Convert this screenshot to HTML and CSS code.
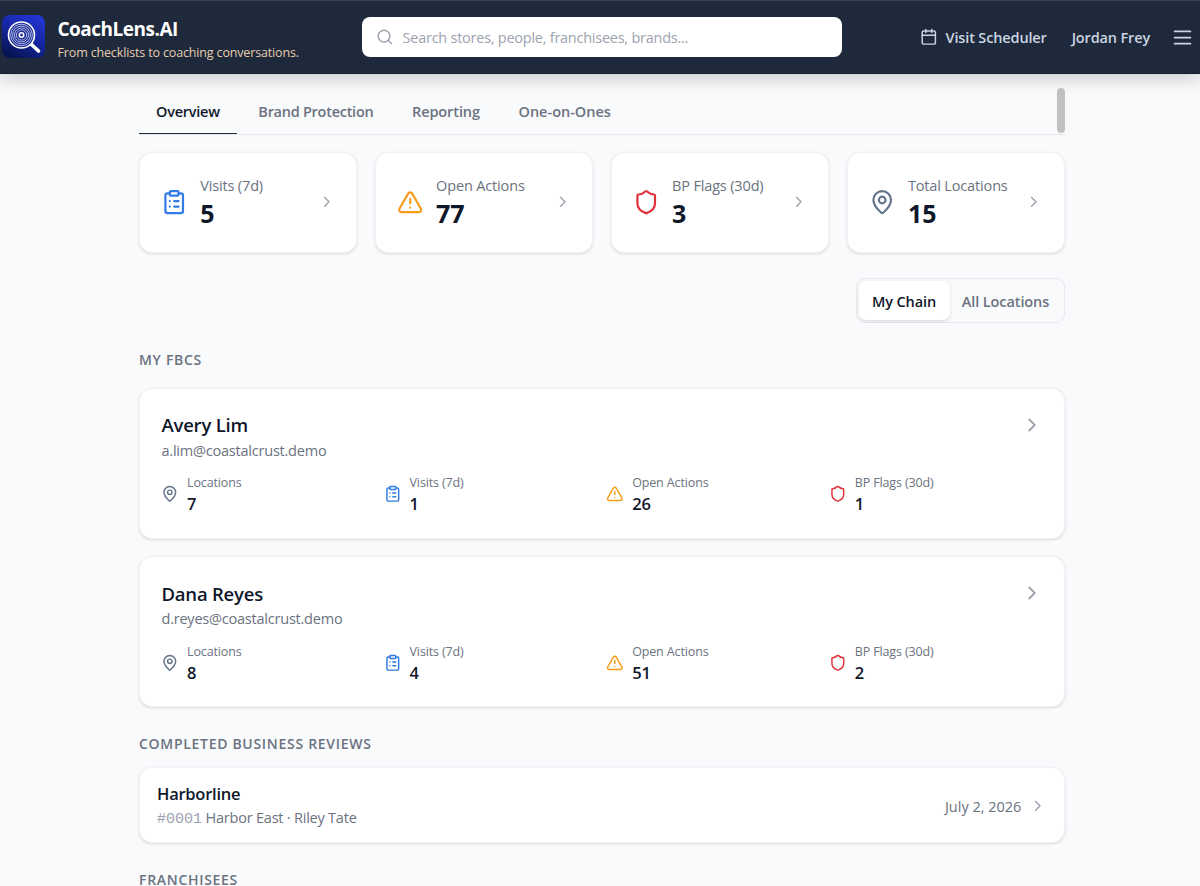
FILE: index.html
```html
<!DOCTYPE html>
<html lang="en">
<head>
    <meta charset="UTF-8">
    <meta name="viewport" content="width=device-width, initial-scale=1.0">
    <title>CoachLens.AI</title>
    <link rel="stylesheet" href="styles.css">
</head>
<body>
    <svg class="sprite">
        <symbol id="clipboard" viewBox="0 0 24 24">
            <rect x="8" y="2" width="8" height="4" rx="1"/>
            <path d="M16 4h2a2 2 0 0 1 2 2v14a2 2 0 0 1-2 2H6a2 2 0 0 1-2-2V6a2 2 0 0 1 2-2h2M12 11h4M12 16h4M8 11h.01M8 16h.01"/>
        </symbol>
        <symbol id="warning" viewBox="0 0 24 24">
            <path d="m21.73 18-8-14a2 2 0 0 0-3.48 0l-8 14A2 2 0 0 0 4 21h16a2 2 0 0 0 1.73-3ZM12 9v4M12 17h.01"/>
        </symbol>
        <symbol id="shield" viewBox="0 0 24 24">
            <path d="M20 13c0 5-3.5 7.5-7.66 8.95a1 1 0 0 1-.67-.01C7.5 20.5 4 18 4 13V6a1 1 0 0 1 1-1c2 0 4.5-1.2 6.24-2.72a1.17 1.17 0 0 1 1.52 0C14.51 3.81 17 5 19 5a1 1 0 0 1 1 1z"/>
        </symbol>
        <symbol id="pin" viewBox="0 0 24 24">
            <path d="M20 10c0 5-5.54 10.19-7.4 11.8a1 1 0 0 1-1.2 0C9.54 20.19 4 15 4 10a8 8 0 0 1 16 0"/>
            <circle cx="12" cy="10" r="3"/>
        </symbol>
        <symbol id="chevron" viewBox="0 0 24 24"><path d="m9 18 6-6-6-6"/></symbol>
    </svg>

    <header class="header">
        <div class="brand">
            <svg class="logo" viewBox="0 0 43 43">
                <defs>
                    <linearGradient id="logo-bg" x1="0.8" y1="0" x2="0.3" y2="1">
                        <stop offset="0" stop-color="#2436d4"/>
                        <stop offset="0.5" stop-color="#1526a0"/>
                        <stop offset="1" stop-color="#071353"/>
                    </linearGradient>
                </defs>
                <rect width="43" height="43" rx="8" fill="url(#logo-bg)"/>
                <path d="M29 29l7.5 7" stroke="#fff" stroke-width="3.6" stroke-linecap="round"/>
                <circle cx="19.5" cy="20" r="13" fill="#1b2b93" stroke="#fff" stroke-width="1.6"/>
                <g fill="none" stroke="#d5dafa" stroke-width="0.8">
                    <circle cx="19.5" cy="20" r="10.8"/>
                    <circle cx="19.5" cy="20" r="8.9"/>
                    <circle cx="19.5" cy="20" r="7"/>
                    <circle cx="19.5" cy="20" r="5.1"/>
                </g>
                <circle cx="19.5" cy="20" r="2.2" fill="#1b2b93" stroke="#fff" stroke-width="1.6"/>
            </svg>
            <div class="brand-text">
                <div class="brand-name">CoachLens.AI</div>
                <div class="brand-tag">From checklists to coaching conversations.</div>
            </div>
        </div>
        <div class="search">
            <svg class="icon search-icon" viewBox="0 0 24 24"><circle cx="11" cy="11" r="8"/><path d="m21 21-4.3-4.3"/></svg>
            <span>Search stores, people, franchisees, brands...</span>
        </div>
        <nav class="nav">
            <a class="nav-link scheduler">
                <svg class="icon calendar" viewBox="0 0 24 24"><rect x="3" y="4" width="18" height="18" rx="2"/><path d="M8 2v4M16 2v4M3 10h18"/></svg>
                <span>Visit Scheduler</span>
            </a>
            <a class="nav-link user">Jordan Frey</a>
            <svg class="icon menu" viewBox="0 0 24 24"><path d="M3 5h18M3 12h18M3 19h18"/></svg>
        </nav>
    </header>

    <main class="container">
        <div class="tabs">
            <a class="tab active">Overview</a>
            <a class="tab tab-brand">Brand Protection</a>
            <a class="tab tab-report">Reporting</a>
            <a class="tab tab-ones">One-on-Ones</a>
            <span class="scroll-thumb"></span>
        </div>

        <div class="stats">
            <div class="card stat">
                <svg class="icon stat-icon blue"><use href="#clipboard"/></svg>
                <div>
                    <div class="stat-label">Visits (7d)</div>
                    <div class="stat-value">5</div>
                </div>
                <svg class="icon chevron"><use href="#chevron"/></svg>
            </div>
            <div class="card stat">
                <svg class="icon stat-icon amber"><use href="#warning"/></svg>
                <div>
                    <div class="stat-label">Open Actions</div>
                    <div class="stat-value">77</div>
                </div>
                <svg class="icon chevron"><use href="#chevron"/></svg>
            </div>
            <div class="card stat">
                <svg class="icon stat-icon red"><use href="#shield"/></svg>
                <div>
                    <div class="stat-label">BP Flags (30d)</div>
                    <div class="stat-value">3</div>
                </div>
                <svg class="icon chevron"><use href="#chevron"/></svg>
            </div>
            <div class="card stat">
                <svg class="icon stat-icon slate"><use href="#pin"/></svg>
                <div>
                    <div class="stat-label">Total Locations</div>
                    <div class="stat-value">15</div>
                </div>
                <svg class="icon chevron"><use href="#chevron"/></svg>
            </div>
        </div>

        <div class="toggle">
            <button class="toggle-btn selected">My Chain</button>
            <button class="toggle-btn">All Locations</button>
        </div>

        <h2 class="section-title">MY FBCS</h2>
        <div class="people">
            <div class="card person">
                <div class="person-head">
                    <div>
                        <div class="person-name">Avery Lim</div>
                        <div class="person-email">a.lim@coastalcrust.demo</div>
                    </div>
                    <svg class="icon chevron big"><use href="#chevron"/></svg>
                </div>
                <div class="metrics">
                    <div class="metric">
                        <svg class="icon slate"><use href="#pin"/></svg>
                        <div><div class="metric-label">Locations</div><div class="metric-value">7</div></div>
                    </div>
                    <div class="metric">
                        <svg class="icon blue"><use href="#clipboard"/></svg>
                        <div><div class="metric-label">Visits (7d)</div><div class="metric-value">1</div></div>
                    </div>
                    <div class="metric">
                        <svg class="icon amber"><use href="#warning"/></svg>
                        <div><div class="metric-label">Open Actions</div><div class="metric-value">26</div></div>
                    </div>
                    <div class="metric">
                        <svg class="icon red"><use href="#shield"/></svg>
                        <div><div class="metric-label">BP Flags (30d)</div><div class="metric-value">1</div></div>
                    </div>
                </div>
            </div>
            <div class="card person">
                <div class="person-head">
                    <div>
                        <div class="person-name">Dana Reyes</div>
                        <div class="person-email">d.reyes@coastalcrust.demo</div>
                    </div>
                    <svg class="icon chevron big"><use href="#chevron"/></svg>
                </div>
                <div class="metrics">
                    <div class="metric">
                        <svg class="icon slate"><use href="#pin"/></svg>
                        <div><div class="metric-label">Locations</div><div class="metric-value">8</div></div>
                    </div>
                    <div class="metric">
                        <svg class="icon blue"><use href="#clipboard"/></svg>
                        <div><div class="metric-label">Visits (7d)</div><div class="metric-value">4</div></div>
                    </div>
                    <div class="metric">
                        <svg class="icon amber"><use href="#warning"/></svg>
                        <div><div class="metric-label">Open Actions</div><div class="metric-value">51</div></div>
                    </div>
                    <div class="metric">
                        <svg class="icon red"><use href="#shield"/></svg>
                        <div><div class="metric-label">BP Flags (30d)</div><div class="metric-value">2</div></div>
                    </div>
                </div>
            </div>
        </div>

        <h2 class="section-title reviews-title">COMPLETED BUSINESS REVIEWS</h2>
        <div class="card review">
            <div>
                <div class="review-name">Harborline</div>
                <div class="review-info"><span class="store-no">#0001</span> Harbor East · Riley Tate</div>
            </div>
            <div class="review-date">July 2, 2026</div>
            <svg class="icon chevron"><use href="#chevron"/></svg>
        </div>

        <h2 class="section-title franchisees-title">FRANCHISEES</h2>
    </main>
</body>
</html>
```

FILE: styles.css
```css
* {
    box-sizing: border-box;
}
body {
    margin: 0;
    height: 886px;
    overflow: hidden;
    background-color: #f9fafc;
    color: #0f172a;
    font-family: "Open Sans", "Noto Sans", sans-serif;
    font-size: 14.5px;
}
.sprite {
    display: none;
}
.icon {
    display: block;
    flex: none;
    width: 17.6px;
    height: 17.6px;
    fill: none;
    stroke: currentColor;
    stroke-width: 2;
    stroke-linecap: round;
    stroke-linejoin: round;
}
.blue { color: #2f7be8; }
.amber { color: #f59e1b; }
.red { color: #e0303a; }
.slate { color: #64748b; }

.header {
    display: flex;
    align-items: center;
    height: 74px;
    padding: 0 9px 0 2px;
    background-color: #1e293b;
    border-top: 1px solid #37444d;
    border-bottom: 1px solid #142033;
    box-shadow: 0 6px 16px rgba(0, 0, 0, 0.17);
}
.brand {
    display: flex;
    align-items: center;
    gap: 12.5px;
    width: 360px;
}
.logo {
    width: 43px;
    height: 43px;
    margin-bottom: 2px;
}
.brand-text {
    padding-top: 3px;
}
.brand-name {
    color: #fff;
    font-size: 19px;
    font-weight: 700;
    line-height: 28px;
    letter-spacing: -0.5px;
}
.brand-tag {
    color: #e6cdb0;
    font-size: 12.5px;
    line-height: 20px;
    letter-spacing: -0.15px;
}
.search {
    display: flex;
    align-items: center;
    gap: 9px;
    width: 480px;
    height: 40px;
    padding-left: 14px;
    background-color: #fff;
    border-radius: 8px;
    color: #9ca3af;
    letter-spacing: -0.25px;
}
.nav {
    display: flex;
    align-items: center;
    margin-left: auto;
    color: #cbd5e1;
}
.nav-link {
    display: flex;
    align-items: center;
    font-weight: 600;
    letter-spacing: -0.15px;
}
.scheduler {
    gap: 8.5px;
    margin-right: 25px;
}
.user {
    margin-right: 22px;
}
.menu {
    width: 21px;
    height: 21px;
    margin-right: -2px;
}

.container {
    width: 926px;
    margin-left: 139px;
}
.tabs {
    display: flex;
    height: 61px;
    padding-top: 14px;
    border-bottom: 1px solid #e5e7eb;
}
.tab {
    height: 46px;
    padding: 13px 17px 0;
    margin-right: 4.6px;
    color: #6b7280;
    font-weight: 600;
    line-height: 22px;
    letter-spacing: -0.1px;
}
.tab.active {
    color: #0f172a;
    border-bottom: 1px solid #1e293b;
    letter-spacing: -0.25px;
}
.tab-brand {
    letter-spacing: -0.27px;
}
.tab-ones {
    letter-spacing: 0;
}
.scroll-thumb {
    width: 8px;
    height: 45px;
    margin-left: auto;
    border-radius: 4px;
    background-color: #c1c1c1;
}

.card {
    background-color: #fff;
    border: 1px solid #f1f2f5;
    border-radius: 13px;
    box-shadow: 0 1px 3px rgba(0, 0, 0, 0.13);
}
.stats {
    display: grid;
    grid-template-columns: repeat(4, 1fr);
    gap: 17.6px;
    margin-top: 17px;
}
.stat {
    display: flex;
    align-items: center;
    height: 101px;
    padding: 0 21px 0.5px;
}
.stat-icon {
    width: 26.4px;
    height: 26.4px;
    margin-right: 12.8px;
}
.stat-label {
    color: #6b7280;
    line-height: 22px;
    letter-spacing: -0.15px;
}
.stat-value {
    font-size: 25px;
    font-weight: 700;
    line-height: 33px;
}
.chevron {
    margin-left: auto;
    color: #9ca3af;
}
.chevron.big {
    width: 22px;
    height: 22px;
}

.toggle {
    display: flex;
    width: 209px;
    height: 45px;
    margin: 25px 0 0 auto;
    padding: 2px;
    border: 1px solid #e5e7eb;
    border-radius: 9px;
}
.toggle-btn {
    flex: 1 0 auto;
    padding: 2px 1px 0 0;
    border: none;
    border-radius: 7px;
    background: none;
    color: #6b7280;
    font-family: inherit;
    font-size: 14.5px;
    font-weight: 600;
    letter-spacing: -0.1px;
}
.toggle-btn.selected {
    flex: none;
    width: 91px;
    background-color: #fff;
    color: #0f172a;
    box-shadow: 0 1px 3px rgba(0, 0, 0, 0.15);
}

.section-title {
    margin: 26px 0 16.6px;
    color: #6b7280;
    font-size: 14px;
    font-weight: 600;
    line-height: 22px;
    letter-spacing: 0.7px;
}
.people {
    display: grid;
    gap: 17.5px;
}
.person {
    height: 151px;
    padding: 22.6px 21.5px 0;
}
.person-head {
    display: flex;
}
.person-name {
    font-size: 18.5px;
    font-weight: 600;
    line-height: 28px;
    letter-spacing: -0.22px;
}
.person-email {
    margin-top: 0.6px;
    color: #6b7280;
    line-height: 22px;
    letter-spacing: -0.22px;
}
.person-head .chevron {
    margin-top: 2.4px;
}
.metrics {
    display: grid;
    grid-template-columns: repeat(4, 1fr);
    gap: 8.8px;
    margin: 11.4px 0 0 -0.5px;
}
.metric {
    display: flex;
    align-items: center;
    gap: 8.4px;
}
.metric-label {
    color: #6b7280;
    font-size: 12.5px;
    line-height: 20px;
    letter-spacing: -0.13px;
}
.metric-value {
    font-size: 16.5px;
    font-weight: 600;
    line-height: 22px;
}

.reviews-title {
    margin: 26px 0 12px;
}
.review {
    display: flex;
    align-items: center;
    height: 76px;
    padding: 2px 17px 0;
}
.review-name {
    font-size: 16.5px;
    font-weight: 600;
    line-height: 25px;
    letter-spacing: -0.25px;
}
.review-info {
    color: #6b7280;
    line-height: 24px;
    letter-spacing: -0.22px;
}
.store-no {
    color: #9ca3af;
    font-family: "Liberation Mono", monospace;
    font-size: 15px;
    letter-spacing: 0;
}
.review-date {
    margin-left: auto;
    color: #6b7280;
}
.review .chevron {
    margin-left: 8px;
}
.franchisees-title {
    margin: 26px 0 0;
}
```
